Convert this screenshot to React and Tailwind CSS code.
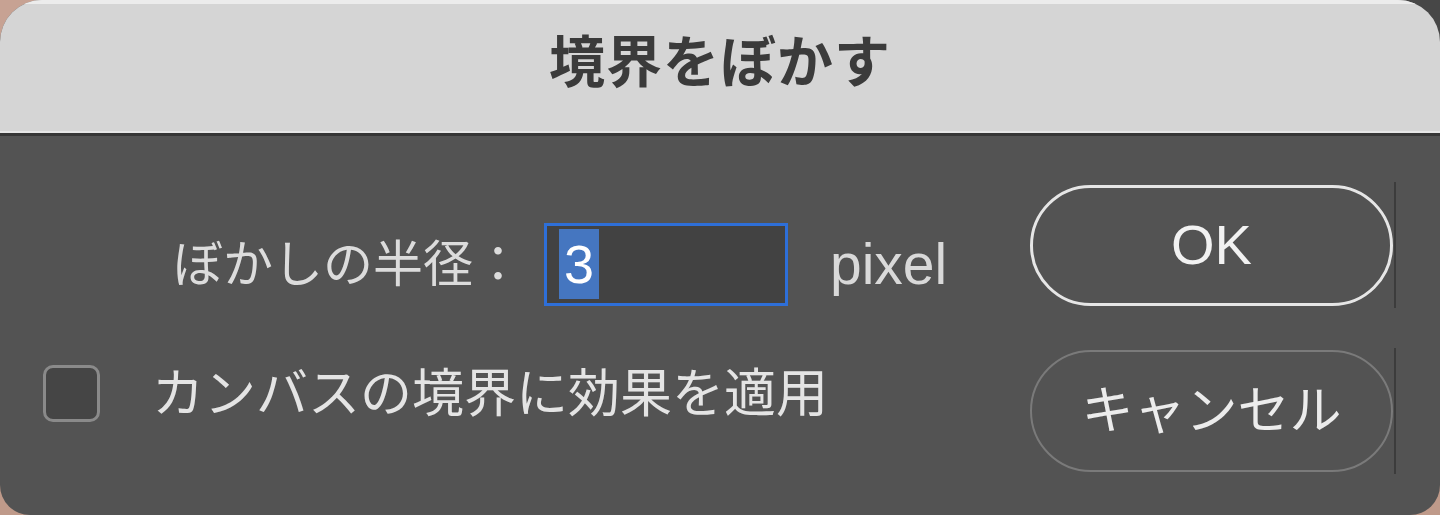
export default function App() {
  const jp = { fontFamily: '"Liberation Sans", "Noto Sans CJK JP", sans-serif' };
  return (
    <div
      className="w-[1440px] h-[515px] overflow-hidden bg-[linear-gradient(to_bottom,transparent_50%,#bf9a8a_50%),linear-gradient(to_right,#c7a293_50%,#474747_50%)]"
      style={jp}
    >
      <div className="w-full h-full flex flex-col rounded-t-[42px] rounded-b-[30px] overflow-hidden bg-[#535353]">
        {/* Title bar */}
        <div className="h-[136px] shrink-0 flex flex-col bg-[#d5d5d5] border-t-[4px] border-[#ececec]">
          <div className="flex-1 flex items-center justify-center pb-[10px]">
            <span className="text-[56px] font-bold text-[#3b3b3b] leading-none tracking-[1px]">境界をぼかす</span>
          </div>
          <div className="h-[2px] bg-[#e6e6e6]" />
          <div className="h-[3px] bg-[#363636]" />
        </div>
        {/* Body */}
        <div className="flex-1 flex">
          <div className="flex-1 flex flex-col pl-[43px] pt-[87px]">
            <div className="flex items-center h-[83px]">
              <span className="ml-[130px] text-[50px] leading-none text-[#dcdcdc]">ぼかしの半径：</span>
              <div className="ml-[21px] w-[244px] h-[83px] border-[3px] border-[#2e6fd8] bg-[#424242] flex items-start pl-[12px] pt-[3px]">
                <span className="h-[70px] w-[40px] bg-[#4576c0] text-white text-[54px] leading-[70px] flex items-center justify-center">3</span>
              </div>
              <span className="ml-[42px] text-[57px] leading-none text-[#d9d9d9]">pixel</span>
            </div>
            <div className="flex items-center mt-[59px] h-[57px]">
              <div className="w-[57px] h-[57px] rounded-[10px] border-[3px] border-[#8a8a8a] bg-[#454545]" />
              <span className="ml-[52px] text-[52px] leading-none text-[#e4e4e4]">カンバスの境界に効果を適用</span>
            </div>
          </div>
          <div className="w-[410px] shrink-0 flex flex-col items-start pr-[44px] pt-[46px] gap-[40px]">
            <div className="flex items-center gap-[1px] h-[126px]">
              <div className="w-[363px] h-[121px] rounded-full border-[3px] border-[#e6e6e6] flex items-center justify-center">
                <span className="text-[56px] leading-none text-[#f2f2f2] font-medium">OK</span>
              </div>
              <div className="w-[2px] h-[126px] bg-[#3c3c3c]" />
            </div>
            <div className="flex items-center gap-[1px] h-[126px]">
              <div className="w-[363px] h-[122px] rounded-full border-[2px] border-[#7a7a7a] flex items-center justify-center">
                <span className="text-[52px] leading-none text-[#ececec]">キャンセル</span>
              </div>
              <div className="w-[2px] h-[126px] bg-[#3c3c3c]" />
            </div>
          </div>
        </div>
      </div>
    </div>
  );
}
